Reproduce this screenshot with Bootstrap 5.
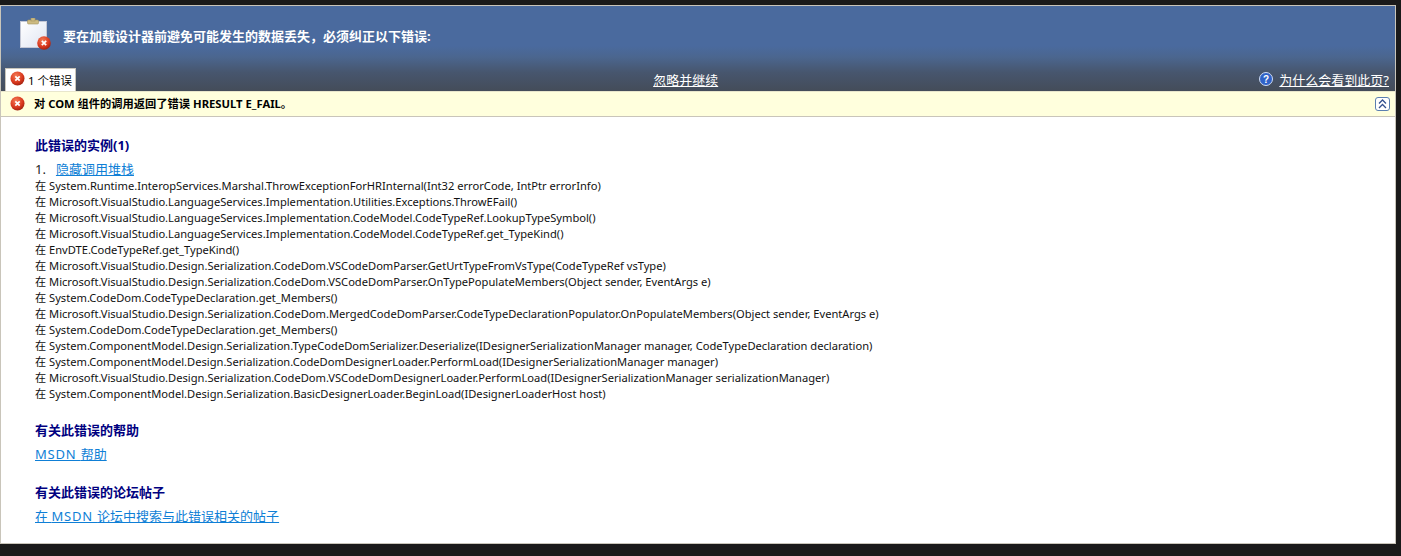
<!DOCTYPE html>
<html lang="zh">
<head>
<meta charset="utf-8">
<title>设计器错误</title>
<link href="https://cdn.jsdelivr.net/npm/bootstrap@5.3.0/dist/css/bootstrap.min.css" rel="stylesheet">
<style>
html,body{height:100%;}
body{background:#1a1a1a;font-family:"Noto Sans","Noto Sans CJK SC",sans-serif;font-size:11px;color:#000;padding:5px 5px 12px 0;overflow:hidden;}
.shell{height:539px;background:#fff;border:1px solid #c9c5ba;width:1396px;}
.head-band{height:85px;background:linear-gradient(to bottom,#4a6a9e 0,#4a6a9e 47%,#4b668f 60%,#47566e 78%,#444c59 100%);}
.head-title{padding:12px 0 0 18px;height:62px;gap:12px;}
.clip{width:32px;height:33px;flex:none;}
.head-text{color:#fff;font-weight:700;font-size:13px;margin-top:9px;}
.tab-row{height:23px;padding-left:4px;}
.err-tab{width:71px;height:23px;background:#fff;border:1px solid #c9c5ba;border-bottom:0;font-size:11.5px;padding-left:4px;gap:3px;color:#000;flex:none;}
.tab-glyph{margin-top:-3px;}
.tab-label{padding-top:1px;}
.skip-link,.why-link{color:#fff;font-size:13px;text-decoration:underline;}
.skip-link:hover,.why-link:hover{color:#fff;}
.skip-wrap{flex:1;text-align:center;padding-left:36px;padding-bottom:1px;}
.why-wrap{padding-right:6px;gap:6px;padding-bottom:1px;}
.why-glyph{margin-top:-3px;}
.alert-band{height:26px;background:#ffffdd;border-top:1px solid #e8e6cc;border-bottom:1px solid #c9c5ba;padding:0 5px 0 9px;gap:9px;font-weight:700;font-size:11.25px;}
.alert-glyph{margin-top:-1px;}
.alert-copy{padding-top:1px;}
.collapse-btn{width:15px;height:14px;border:1px solid #5b7fb0;border-radius:3px;background:#fff;}
.content-area{padding:19px 0 0 34px;}
.sect-title{color:#000080;font-weight:700;font-size:13px;line-height:18px;margin:0;}
.num-line{font-size:13px;line-height:20px;margin-top:5px;color:#222;}
.num-line a{margin-left:10px;}
.blue-link{color:#0f7fd6;font-size:13px;}
.latin-run{letter-spacing:.8px;}
.trace{line-height:16px;font-size:11.15px;margin-top:-1px;color:#111;}
.sect-gap{margin-top:19px;}
.sect-gap-tight{margin-top:19px;}
.link-line{line-height:18px;margin-top:6px;}
</style>
</head>
<body>
<div class="shell d-flex flex-column">
  <div class="head-band d-flex flex-column">
    <div class="head-title d-flex align-items-start">
      <div class="clip">
        <svg width="32" height="33" viewBox="0 0 32 33">
          <defs>
            <linearGradient id="pg" x1="0" y1="0" x2="1" y2="1"><stop offset="0" stop-color="#fff"/><stop offset="1" stop-color="#dfe4f2"/></linearGradient>
            <radialGradient id="rg" cx="0.4" cy="0.3" r="0.8"><stop offset="0" stop-color="#f47a55"/><stop offset="0.6" stop-color="#d9381e"/><stop offset="1" stop-color="#8c1a0c"/></radialGradient>
          </defs>
          <rect x="1.5" y="3.5" width="26" height="26" fill="url(#pg)" stroke="#c4c8d6"/>
          <rect x="8.5" y="2" width="11" height="4" rx="1" fill="#cdbb82" stroke="#a3935f" stroke-width=".6"/>
          <rect x="12" y="0" width="4" height="3" fill="#cdbb82" stroke="#a3935f" stroke-width=".6"/>
          <circle cx="25" cy="25" r="6.8" fill="url(#rg)"/>
          <path d="M22.8 22.8 L27.2 27.2 M27.2 22.8 L22.8 27.2" stroke="#fff" stroke-width="1.7"/>
        </svg>
      </div>
      <div class="head-text">要在加载设计器前避免可能发生的数据丢失，必须纠正以下错误:</div>
    </div>
    <div class="tab-row d-flex align-items-end">
      <div class="err-tab d-flex align-items-center">
        <svg class="tab-glyph" width="15" height="15" viewBox="0 0 15 15"><circle cx="7.5" cy="7.5" r="7" fill="url(#rg)"/><path d="M5.3 5.3 L9.7 9.7 M9.7 5.3 L5.3 9.7" stroke="#fff" stroke-width="1.7"/></svg>
        <span class="tab-label">1 个错误</span>
      </div>
      <div class="skip-wrap"><a class="skip-link" href="#">忽略并继续</a></div>
      <div class="why-wrap d-flex align-items-center">
        <svg class="why-glyph" width="14" height="14" viewBox="0 0 14 14"><circle cx="7" cy="7" r="6.5" fill="#2f62c8" stroke="#cfdcf5"/><text x="7" y="10.5" font-size="10" font-weight="700" fill="#fff" text-anchor="middle" font-family="Liberation Sans">?</text></svg>
        <a class="why-link" href="#">为什么会看到此页?</a>
      </div>
    </div>
  </div>
  <div class="alert-band d-flex align-items-center">
    <svg class="alert-glyph" width="15" height="15" viewBox="0 0 15 15"><circle cx="7.5" cy="7.5" r="7" fill="url(#rg)"/><path d="M5.3 5.3 L9.7 9.7 M9.7 5.3 L5.3 9.7" stroke="#fff" stroke-width="1.7"/></svg>
    <span class="alert-copy flex-grow-1">对 COM 组件的调用返回了错误 HRESULT E_FAIL。</span>
    <span class="collapse-btn d-flex align-items-center justify-content-center">
      <svg width="9" height="10" viewBox="0 0 9 10"><path d="M1 4.5 L4.5 1 L8 4.5 M1 9 L4.5 5.5 L8 9" fill="none" stroke="#34508f" stroke-width="1.3"/></svg>
    </span>
  </div>
  <div class="content-area">
    <div class="sect-title">此错误的实例(1)</div>
    <div class="num-line">1.<a class="blue-link" href="#">隐藏调用堆栈</a></div>
    <div class="trace">
      <div>在 System.Runtime.InteropServices.Marshal.ThrowExceptionForHRInternal(Int32 errorCode, IntPtr errorInfo)</div>
      <div>在 Microsoft.VisualStudio.LanguageServices.Implementation.Utilities.Exceptions.ThrowEFail()</div>
      <div>在 Microsoft.VisualStudio.LanguageServices.Implementation.CodeModel.CodeTypeRef.LookupTypeSymbol()</div>
      <div>在 Microsoft.VisualStudio.LanguageServices.Implementation.CodeModel.CodeTypeRef.get_TypeKind()</div>
      <div>在 EnvDTE.CodeTypeRef.get_TypeKind()</div>
      <div>在 Microsoft.VisualStudio.Design.Serialization.CodeDom.VSCodeDomParser.GetUrtTypeFromVsType(CodeTypeRef vsType)</div>
      <div>在 Microsoft.VisualStudio.Design.Serialization.CodeDom.VSCodeDomParser.OnTypePopulateMembers(Object sender, EventArgs e)</div>
      <div>在 System.CodeDom.CodeTypeDeclaration.get_Members()</div>
      <div>在 Microsoft.VisualStudio.Design.Serialization.CodeDom.MergedCodeDomParser.CodeTypeDeclarationPopulator.OnPopulateMembers(Object sender, EventArgs e)</div>
      <div>在 System.CodeDom.CodeTypeDeclaration.get_Members()</div>
      <div>在 System.ComponentModel.Design.Serialization.TypeCodeDomSerializer.Deserialize(IDesignerSerializationManager manager, CodeTypeDeclaration declaration)</div>
      <div>在 System.ComponentModel.Design.Serialization.CodeDomDesignerLoader.PerformLoad(IDesignerSerializationManager manager)</div>
      <div>在 Microsoft.VisualStudio.Design.Serialization.CodeDom.VSCodeDomDesignerLoader.PerformLoad(IDesignerSerializationManager serializationManager)</div>
      <div>在 System.ComponentModel.Design.Serialization.BasicDesignerLoader.BeginLoad(IDesignerLoaderHost host)</div>
    </div>
    <div class="sect-title sect-gap">有关此错误的帮助</div>
    <div class="link-line"><a class="blue-link" href="#"><span class="latin-run">MSDN </span>帮助</a></div>
    <div class="sect-title sect-gap-tight">有关此错误的论坛帖子</div>
    <div class="link-line"><a class="blue-link" href="#">在 <span class="latin-run">MSDN </span>论坛中搜索与此错误相关的帖子</a></div>
  </div>
</div>
<script src="https://cdn.jsdelivr.net/npm/bootstrap@5.3.0/dist/js/bootstrap.bundle.min.js"></script>
</body>
</html>
